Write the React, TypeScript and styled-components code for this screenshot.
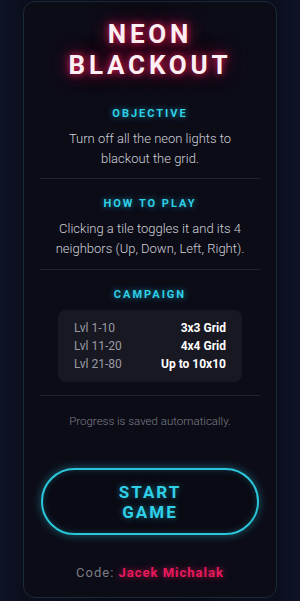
import React from "react";
import styled, { createGlobalStyle } from "styled-components";

const GlobalStyle = createGlobalStyle`
  html, body {
    margin: 0;
    padding: 0;
  }
  body {
    background: linear-gradient(90deg, #0e1326 0%, #0b0e1d 8%, #0a0a16 50%, #0b0e1d 92%, #0e1326 100%);
    font-family: Roboto, "Noto Sans", sans-serif;
    min-height: 100vh;
  }
`;

const Page = styled.div`
  display: flex;
  justify-content: center;
  padding: 1px 0 3px;
`;

const Card = styled.main`
  box-sizing: border-box;
  width: 254px;
  height: 597px;
  background: #0c0c17;
  border: 1px solid #1b2a38;
  border-radius: 12px;
  padding: 17px 16px 0;
  display: flex;
  flex-direction: column;
  align-items: center;
  text-align: center;
`;

const Title = styled.h1`
  margin: 0;
  font-size: 26px;
  line-height: 31px;
  font-weight: 700;
  letter-spacing: 3.8px;
  color: #fdf0f4;
  text-shadow: 0 0 7px rgba(255, 30, 90, 0.85), 0 0 16px rgba(220, 20, 80, 0.6), 0 0 26px rgba(200, 15, 70, 0.35);
`;

const Section = styled.section<{ $top: number }>`
  width: 100%;
  display: flex;
  flex-direction: column;
  align-items: center;
  padding: ${({ $top }) => $top}px 0 0;
`;

const Heading = styled.h2`
  margin: 0 0 8px;
  font-size: 11px;
  line-height: 14px;
  font-weight: 700;
  letter-spacing: 2px;
  color: #2fd0e8;
  text-shadow: 0 0 6px rgba(34, 211, 238, 0.6);
`;

const Body = styled.p`
  margin: 0;
  font-size: 13px;
  line-height: 20px;
  font-weight: 300;
  color: #cfd0d8;
`;

const Divider = styled.hr<{ $top: number }>`
  width: 220px;
  border: none;
  border-top: 1px solid #23232f;
  margin: ${({ $top }) => $top}px 0 0;
`;

const Table = styled.div`
  box-sizing: border-box;
  width: 184px;
  background: #181822;
  border-radius: 8px;
  padding: 9px 16px;
  display: grid;
  grid-template-columns: 1fr auto;
`;

const Lvl = styled.span`
  text-align: left;
  font-size: 12px;
  line-height: 18px;
  color: #9a9aa4;
`;

const Size = styled.span`
  text-align: right;
  font-size: 12px;
  line-height: 18px;
  font-weight: 700;
  color: #ffffff;
`;

const Note = styled.p`
  margin: 18px 0 0;
  font-size: 11.5px;
  line-height: 14px;
  font-weight: 300;
  color: #7c7d88;
`;

const StartButton = styled.button`
  box-sizing: border-box;
  margin-top: 40px;
  width: 218px;
  height: 67px;
  border-radius: 34px;
  border: 2px solid #2cc6da;
  background: #0a0a14;
  box-shadow: 0 0 10px rgba(44, 198, 218, 0.45), inset 0 0 6px rgba(44, 198, 218, 0.25);
  color: #2fd0e8;
  font-family: Roboto, sans-serif;
  font-size: 17px;
  line-height: 20px;
  font-weight: 700;
  letter-spacing: 2px;
  text-shadow: 0 0 6px rgba(34, 211, 238, 0.5);
  cursor: pointer;
`;

const Credit = styled.p`
  margin: 30px 0 0;
  font-size: 13px;
  line-height: 15px;
  color: #7d7d86;
  letter-spacing: 1px;

  strong {
    color: #e8195c;
    font-weight: 700;
    text-shadow: 0 0 6px rgba(232, 25, 92, 0.7);
  }
`;

const levels = [
  ["Lvl 1-10", "3x3 Grid"],
  ["Lvl 11-20", "4x4 Grid"],
  ["Lvl 21-80", "Up to 10x10"],
];

export default function App() {
  return (
    <>
      <GlobalStyle />
      <Page>
        <Card>
          <Title>
            NEON
            <br />
            BLACKOUT
          </Title>

          <Section $top={26}>
            <Heading>OBJECTIVE</Heading>
            <Body>
              Turn off all the neon lights to
              <br />
              blackout the grid.
            </Body>
          </Section>
          <Divider $top={9} />

          <Section $top={18}>
            <Heading>HOW TO PLAY</Heading>
            <Body>
              Clicking a tile toggles it and its 4
              <br />
              neighbors (Up, Down, Left, Right).
            </Body>
          </Section>
          <Divider $top={10} />

          <Section $top={18}>
            <Heading>CAMPAIGN</Heading>
            <Table>
              {levels.map(([lvl, size]) => (
                <React.Fragment key={lvl}>
                  <Lvl>{lvl}</Lvl>
                  <Size>{size}</Size>
                </React.Fragment>
              ))}
            </Table>
          </Section>
          <Divider $top={13} />

          <Note>Progress is saved automatically.</Note>

          <StartButton>
            START
            <br />
            GAME
          </StartButton>

          <Credit>
            Code: <strong>Jacek Michalak</strong>
          </Credit>
        </Card>
      </Page>
    </>
  );
}
